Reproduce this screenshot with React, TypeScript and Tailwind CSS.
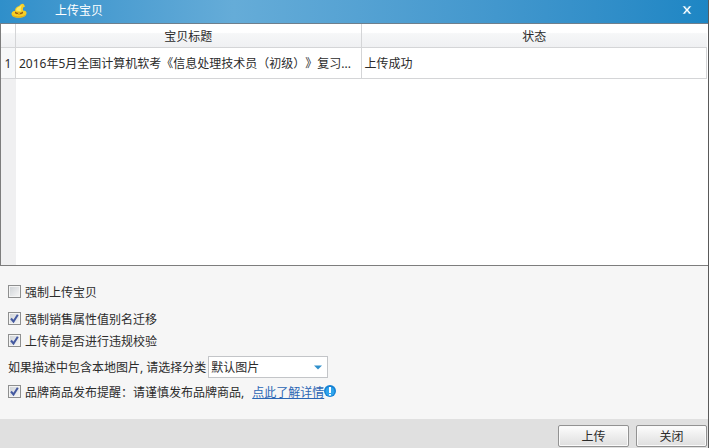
import { useState } from "react"
import type { ReactNode } from "react"

interface Item {
    title: string
    status: string
}

const items: Item[] = [
    { title: "2016年5月全国计算机软考《信息处理技术员（初级）》复习...", status: "上传成功" },
]

function HatIcon() {
    return (
        <svg width="16" height="16" viewBox="0 0 16 16" aria-hidden="true">
            <path d="M0.500 10.500C1 8.500 2.500 8 4 8C4 5 5.500 4 8 3C9.500 2.300 9.500 0.800 12 0.800C13 1.200 13.800 2.500 13.800 4C12.500 3.500 11.500 4.500 12 7.500C14.500 7.500 15.800 8.500 15.500 10.500C15 13.500 11.500 14.800 7.800 14.800C3.500 14.600 0.500 13.500 0.500 10.500Z" fill="#f7cf25" />
            <path d="M5 7.500C5.300 5.500 6.500 4.500 8.500 3.800L11 2C9.800 4 9.500 6 10 8.500Z" fill="#fdea66" />
            <path d="M4 8.500C6 10.300 10 10.300 12 8.500L12 10.200C9.800 11.800 6.200 11.800 4 10.200Z" fill="#9a5a12" />
            <rect x="7" y="9.500" width="2" height="2" fill="#e8b11a" />
            <path d="M1.500 12.300C4.500 14.600 11.500 14.600 14.500 12" fill="none" stroke="#e2a916" />
        </svg>
    )
}

function CheckOption({ initial, children }: { initial?: boolean; children: ReactNode }) {
    const [checked, setChecked] = useState(!!initial)

    return (
        <label className="flex items-start gap-1">
            <span className="grid size-[13px] shrink-0">
                <input
                    type="checkbox"
                    checked={checked}
                    onChange={(e) => setChecked(e.target.checked)}
                    className="col-start-1 row-start-1 size-[13px] appearance-none border border-[#8e8f8f] bg-linear-to-br from-[#cdd1d5] to-[#f8f8f8] shadow-[inset_0_0_0_1px_#f4f4f4]"
                />
                {checked && (
                    <svg viewBox="0 0 13 13" className="pointer-events-none col-start-1 row-start-1 size-[13px]" aria-hidden="true">
                        <path d="M3 6.500L5.500 9.500L9.800 2.800" fill="none" stroke="#4459a0" strokeWidth="2" />
                    </svg>
                )}
            </span>
            <span>{children}</span>
        </label>
    )
}

function FooterButton({ children }: { children: ReactNode }) {
    return (
        <button
            type="button"
            className="h-[22px] w-[71px] rounded-[2px] border border-[#929292] bg-linear-to-b from-[#fdfdfd] to-[#dedede] pt-px leading-5 shadow-[inset_0_0_0_1px_#fafafa]"
        >
            {children}
        </button>
    )
}

export default function App() {
    const [category, setCategory] = useState("默认图片")

    return (
        <div className="flex min-h-screen flex-col border-r border-[#5a5a5a] bg-[#f6f6f6] font-['Noto_Sans','Noto_Sans_CJK_SC',sans-serif] text-xs leading-4 text-[#2b2b2b] [text-spacing-trim:space-all]">
            <header className="flex h-6 items-center border-b border-[#6f7f8c] bg-linear-to-r from-[#2f8fca] via-[#65acd8] via-33% to-[#1d86c4] pr-4 pl-[11px] text-white">
                <div className="-mt-0.5 flex items-center gap-7">
                    <HatIcon />
                    <h1 className="leading-4">上传宝贝</h1>
                </div>
                <button type="button" aria-label="关闭窗口" className="-mt-1 ml-auto">
                    <svg width="10" height="10" viewBox="0 0 10 10" className="block" aria-hidden="true">
                        <path d="M0.500 1H3L5 3.500L7 1H9.500L6.300 5L9.500 9H7L5 6.500L3 9H0.500L3.700 5Z" fill="#b4d9ee" />
                        <path d="M2 2L8 8M8 2L2 8" stroke="#fff" />
                    </svg>
                </button>
            </header>

            <div className="flex flex-1 flex-col border-b border-l border-[#7d7d7d] bg-white pr-px">
                <table className="w-full table-fixed border-separate border-spacing-0">
                    <colgroup>
                        <col className="w-[15px]" />
                        <col />
                        <col />
                    </colgroup>
                    <thead>
                        <tr className="h-6 bg-linear-to-b from-white from-35% via-[#f6f7f8] via-40% to-[#eff0f2]">
                            <th className="border-r border-b border-[#d4d5d7] p-0" />
                            <th className="border-r border-b border-[#d4d5d7] p-0 pt-0.5 font-normal">宝贝标题</th>
                            <th className="border-b border-[#d4d5d7] p-0 pt-0.5 font-normal">状态</th>
                        </tr>
                    </thead>
                    <tbody>
                        {items.map((item, i) => (
                            <tr key={item.title} className="h-[31px]">
                                <th className="border-r border-b border-[#d4d5d7] bg-[#f7f8f9] p-0 pt-0.5 font-normal">{i + 1}</th>
                                <td className="truncate border-r border-b border-[#d4d5d7] p-0 pt-0.5 pl-[3px]">{item.title}</td>
                                <td className="border-r border-b border-[#d4d5d7] p-0 pt-0.5 pl-[3px]">{item.status}</td>
                            </tr>
                        ))}
                    </tbody>
                </table>
                <div className="w-[15px] flex-1 bg-[#f0f0f1]" />
            </div>

            <form className="px-2 pt-[19px] pb-[18px]">
                <CheckOption>强制上传宝贝</CheckOption>
                <div className="mt-[11px] flex flex-col gap-1.5">
                    <CheckOption initial>强制销售属性值别名迁移</CheckOption>
                    <CheckOption initial>上传前是否进行违规校验</CheckOption>
                </div>
                <div className="mt-1.5 flex items-center gap-0.5">
                    <label htmlFor="category" className="pt-0.5">如果描述中包含本地图片, 请选择分类</label>
                    <span className="grid w-[120px] items-center">
                        <select
                            id="category"
                            value={category}
                            onChange={(e) => setCategory(e.target.value)}
                            className="col-start-1 row-start-1 h-[22px] appearance-none border border-[#c3c5c8] bg-white pt-px pl-0.5 leading-5"
                        >
                            <option>默认图片</option>
                        </select>
                        <svg width="8" height="5" viewBox="0 0 8 5" className="pointer-events-none col-start-1 row-start-1 mr-1.5 justify-self-end" aria-hidden="true">
                            <path d="M0 0.500H8L4 4.500Z" fill="#2f8fcb" />
                        </svg>
                    </span>
                </div>
                <div className="mt-[7px] flex items-start">
                    <CheckOption initial>品牌商品发布提醒：请谨慎发布品牌商品,</CheckOption>
                    <a href="#details" className="ml-2 text-[#2b66b4] underline">点此了解详情</a>
                    <svg width="12" height="12" viewBox="0 0 12 12" aria-hidden="true">
                        <circle cx="6" cy="6" r="6" fill="#1581d3" />
                        <circle cx="6" cy="6.500" r="4.500" fill="#2fa4ec" />
                        <path d="M5 2H7V8H5ZM5 9H7V10.500H5Z" fill="#fff" />
                    </svg>
                </div>
            </form>

            <footer className="flex justify-end gap-[7px] bg-[#e0e0e0] pt-1.5 pr-px pb-px">
                <FooterButton>上传</FooterButton>
                <FooterButton>关闭</FooterButton>
            </footer>
        </div>
    )
}
